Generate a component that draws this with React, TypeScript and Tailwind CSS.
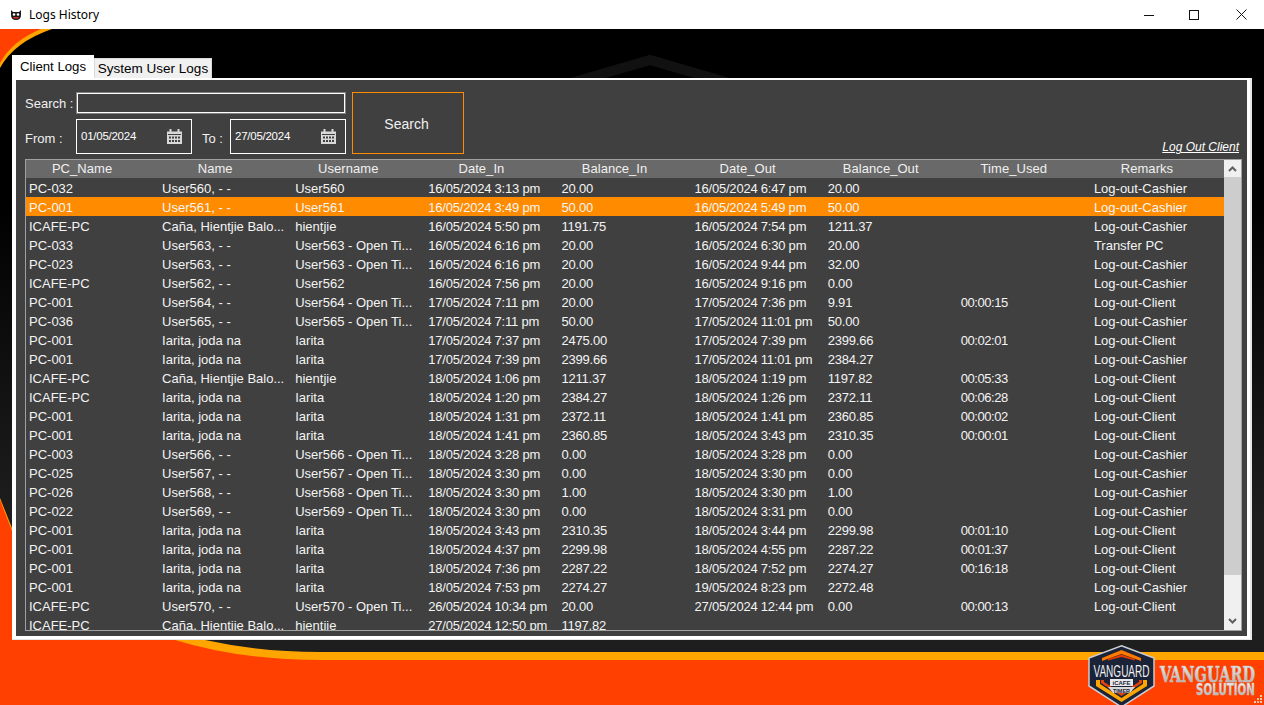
import React from 'react';

const rows: string[][] = [
  ['PC-032', 'User560, - -', 'User560', '16/05/2024 3:13 pm', '20.00', '16/05/2024 6:47 pm', '20.00', '', 'Log-out-Cashier'],
  ['PC-001', 'User561, - -', 'User561', '16/05/2024 3:49 pm', '50.00', '16/05/2024 5:49 pm', '50.00', '', 'Log-out-Cashier'],
  ['ICAFE-PC', 'Caña, Hientjie Balo...', 'hientjie', '16/05/2024 5:50 pm', '1191.75', '16/05/2024 7:54 pm', '1211.37', '', 'Log-out-Cashier'],
  ['PC-033', 'User563, - -', 'User563 - Open Ti...', '16/05/2024 6:16 pm', '20.00', '16/05/2024 6:30 pm', '20.00', '', 'Transfer PC'],
  ['PC-023', 'User563, - -', 'User563 - Open Ti...', '16/05/2024 6:16 pm', '20.00', '16/05/2024 9:44 pm', '32.00', '', 'Log-out-Cashier'],
  ['ICAFE-PC', 'User562, - -', 'User562', '16/05/2024 7:56 pm', '20.00', '16/05/2024 9:16 pm', '0.00', '', 'Log-out-Cashier'],
  ['PC-001', 'User564, - -', 'User564 - Open Ti...', '17/05/2024 7:11 pm', '20.00', '17/05/2024 7:36 pm', '9.91', '00:00:15', 'Log-out-Client'],
  ['PC-036', 'User565, - -', 'User565 - Open Ti...', '17/05/2024 7:11 pm', '50.00', '17/05/2024 11:01 pm', '50.00', '', 'Log-out-Cashier'],
  ['PC-001', 'Iarita, joda na', 'Iarita', '17/05/2024 7:37 pm', '2475.00', '17/05/2024 7:39 pm', '2399.66', '00:02:01', 'Log-out-Client'],
  ['PC-001', 'Iarita, joda na', 'Iarita', '17/05/2024 7:39 pm', '2399.66', '17/05/2024 11:01 pm', '2384.27', '', 'Log-out-Cashier'],
  ['ICAFE-PC', 'Caña, Hientjie Balo...', 'hientjie', '18/05/2024 1:06 pm', '1211.37', '18/05/2024 1:19 pm', '1197.82', '00:05:33', 'Log-out-Client'],
  ['ICAFE-PC', 'Iarita, joda na', 'Iarita', '18/05/2024 1:20 pm', '2384.27', '18/05/2024 1:26 pm', '2372.11', '00:06:28', 'Log-out-Client'],
  ['PC-001', 'Iarita, joda na', 'Iarita', '18/05/2024 1:31 pm', '2372.11', '18/05/2024 1:41 pm', '2360.85', '00:00:02', 'Log-out-Client'],
  ['PC-001', 'Iarita, joda na', 'Iarita', '18/05/2024 1:41 pm', '2360.85', '18/05/2024 3:43 pm', '2310.35', '00:00:01', 'Log-out-Client'],
  ['PC-003', 'User566, - -', 'User566 - Open Ti...', '18/05/2024 3:28 pm', '0.00', '18/05/2024 3:28 pm', '0.00', '', 'Log-out-Cashier'],
  ['PC-025', 'User567, - -', 'User567 - Open Ti...', '18/05/2024 3:30 pm', '0.00', '18/05/2024 3:30 pm', '0.00', '', 'Log-out-Cashier'],
  ['PC-026', 'User568, - -', 'User568 - Open Ti...', '18/05/2024 3:30 pm', '1.00', '18/05/2024 3:30 pm', '1.00', '', 'Log-out-Cashier'],
  ['PC-022', 'User569, - -', 'User569 - Open Ti...', '18/05/2024 3:30 pm', '0.00', '18/05/2024 3:31 pm', '0.00', '', 'Log-out-Cashier'],
  ['PC-001', 'Iarita, joda na', 'Iarita', '18/05/2024 3:43 pm', '2310.35', '18/05/2024 3:44 pm', '2299.98', '00:01:10', 'Log-out-Client'],
  ['PC-001', 'Iarita, joda na', 'Iarita', '18/05/2024 4:37 pm', '2299.98', '18/05/2024 4:55 pm', '2287.22', '00:01:37', 'Log-out-Client'],
  ['PC-001', 'Iarita, joda na', 'Iarita', '18/05/2024 7:36 pm', '2287.22', '18/05/2024 7:52 pm', '2274.27', '00:16:18', 'Log-out-Client'],
  ['PC-001', 'Iarita, joda na', 'Iarita', '18/05/2024 7:53 pm', '2274.27', '19/05/2024 8:23 pm', '2272.48', '', 'Log-out-Cashier'],
  ['ICAFE-PC', 'User570, - -', 'User570 - Open Ti...', '26/05/2024 10:34 pm', '20.00', '27/05/2024 12:44 pm', '0.00', '00:00:13', 'Log-out-Client'],
  ['ICAFE-PC', 'Caña, Hientjie Balo...', 'hientjie', '27/05/2024 12:50 pm', '1197.82', '', '', '', ''],
];

const columns = ['PC_Name', 'Name', 'Username', 'Date_In', 'Balance_In', 'Date_Out', 'Balance_Out', 'Time_Used', 'Remarks'];

// the digits in the reference run a little narrower than Liberation Sans
const cellTracking = ['', '', '', 'tracking-[-0.22px]', 'tracking-[-0.2px]', 'tracking-[-0.22px]', 'tracking-[-0.2px]', 'tracking-[-0.45px]', ''];

const Backdrop = () => (
  <svg className="absolute inset-0 h-full w-full" viewBox="0 0 1264 705">
    <defs>
      <linearGradient id="fade" x1="0" y1="0" x2="0" y2="1">
        <stop offset="0" stopColor="#000000" />
        <stop offset="1" stopColor="#1e1e1e" />
      </linearGradient>
    </defs>
    <rect x="0" y="29" width="1264" height="676" fill="#000000" />
    <rect x="0" y="200" width="1264" height="320" fill="url(#fade)" />
    <rect x="0" y="520" width="1264" height="140" fill="#1e1e1e" />
    <path d="M0 68 Q14 42 52 29 L0 29 Z" fill="#ffa500" />
    <path d="M0 63 Q12 41 41 29 L0 29 Z" fill="#ff4000" />
    <path d="M540 92 L650 60 L760 92" fill="none" stroke="#111111" strokeWidth="10" />
    <path d="M0 498 L12 528 Q80 620 205 640 Q260 652 320 652 H1264 V705 H0 Z" fill="#ffa500" />
    <path d="M0 500 L12 531 Q70 615 175 640 Q240 660 320 660 H1264 V705 H0 Z" fill="#ff4000" />
  </svg>
);

const CalendarIcon = () => (
  <svg width="17" height="17" viewBox="0 0 17 17" className="shrink-0">
    <path d="M1 3.5 H16 V16 H1 Z" fill="#d8d8d8" />
    <rect x="3.5" y="1" width="2" height="4" fill="#d8d8d8" />
    <rect x="11.5" y="1" width="2" height="4" fill="#d8d8d8" />
    <rect x="2" y="6" width="13" height="1" fill="#404040" />
    {[3, 6, 9, 12].map((x) => (
      <React.Fragment key={x}>
        <rect x={x} y="8.5" width="2" height="2" fill="#404040" />
        <rect x={x} y="12" width="2" height="2" fill="#404040" />
      </React.Fragment>
    ))}
  </svg>
);

const DateBox = ({ value }: { value: string }) => (
  <div className="flex h-[35px] w-[116px] items-start justify-between border border-white pl-[4px] pr-[8px] pt-[8px]">
    <span className="mt-px text-[11.5px] leading-[14px] tracking-[-0.25px] text-white">{value}</span>
    <CalendarIcon />
  </div>
);

const BrandLogo = () => (
  <svg className="absolute left-[1088px] top-[645px]" width="176" height="60" viewBox="0 0 176 60">
    <defs>
      <linearGradient id="chrome" x1="0" y1="0" x2="0" y2="1">
        <stop offset="0" stopColor="#f6f6f6" />
        <stop offset="1" stopColor="#a6a6a6" />
      </linearGradient>
    </defs>
    <path d="M33.5 0.8 L66 13 V41 L33.5 62 L1 41 V13 Z" fill="#1b2338" stroke="#c9ccd2" strokeWidth="1.5" />
    <path d="M14 13 L33.5 5 L53 13 L53 16 L33.5 9 L14 16 Z" fill="#ff7a00" />
    <path d="M20 14 L33.5 9.5 L47 14 L47 15.5 L33.5 12 L20 15.5 Z" fill="#e23b00" />
    <text x="33.5" y="32" textAnchor="middle" fontFamily="'Liberation Sans', sans-serif" fontSize="17" fill="#f2f2f2" textLength="56" lengthAdjust="spacingAndGlyphs">
      VANGUARD
    </text>
    <path d="M8 35 L8 41 L33.5 57 L59 41 L59 35 L55 35 L55 39 L33.5 53 L12 39 L12 35 Z" fill="#ffa500" />
    <path d="M13 35 L13 38 L33.5 51 L54 38 L54 35 L51 35 L51 37 L33.5 48 L16 37 L16 35 Z" fill="#e8400a" />
    <rect x="22" y="34" width="23" height="7" fill="#e8e8e8" />
    <text x="33.5" y="40" textAnchor="middle" fontFamily="'Liberation Sans', sans-serif" fontWeight="700" fontSize="6" fill="#1b2338">
      iCAFE
    </text>
    <path d="M20 42 H47 L42 48 H25 Z" fill="#d8d8d8" />
    <text x="33.5" y="47.5" textAnchor="middle" fontFamily="'Liberation Sans', sans-serif" fontWeight="700" fontSize="5.5" fill="#1b2338">
      TIMER
    </text>
    <text x="72" y="37" fontFamily="'DejaVu Serif', serif" fontWeight="700" fontSize="22" fill="url(#chrome)" stroke="#c4c4c4" strokeWidth="0.6" textLength="95" lengthAdjust="spacingAndGlyphs">
      VANGUARD
    </text>
    <text x="108" y="50" fontFamily="'DejaVu Sans', sans-serif" fontWeight="700" fontSize="15" fill="url(#chrome)" stroke="#c4c4c4" strokeWidth="0.4" textLength="59" lengthAdjust="spacingAndGlyphs">
      SOLUTION
    </text>
  </svg>
);

const Scrollbar = () => (
  <div className="flex flex-1 flex-col bg-[#f0f0f0]">
    <div className="flex h-[17px] items-center justify-center">
      <svg width="9" height="6" viewBox="0 0 9 6">
        <path d="M1 5 L4.5 1.5 L8 5" fill="none" stroke="#606060" strokeWidth="2" />
      </svg>
    </div>
    <div className="h-[398px] bg-[#cdcdcd]" />
    <div className="flex flex-1 items-end justify-center pb-[6px]">
      <svg width="9" height="6" viewBox="0 0 9 6">
        <path d="M1 1 L4.5 4.5 L8 1" fill="none" stroke="#606060" strokeWidth="2" />
      </svg>
    </div>
  </div>
);

const LogsGrid = () => (
  <div className="flex h-[472px] w-[1217px] overflow-hidden border border-[#a0a0a0] bg-[#404040]">
    <div className="w-[1198px] shrink-0 overflow-hidden">
      <div className="grid h-[18px] grid-cols-9 bg-[#696969] text-[#f0f0f0]">
        {columns.map((c) => (
          <div key={c} className="pr-[21px] text-center leading-[18px] tracking-[0.05px]">
            {c}
          </div>
        ))}
      </div>
      {rows.map((row, i) => (
        <div key={i} className={`grid h-[19px] grid-cols-9 text-[#f4f4f4] ${i === 1 ? 'bg-[#ff8c00]' : ''}`}>
          {row.map((cell, j) => (
            <div key={j} className={`whitespace-nowrap pl-[3px] pt-px leading-[19px] ${cellTracking[j]}`}>
              {cell}
            </div>
          ))}
        </div>
      ))}
    </div>
    <Scrollbar />
  </div>
);

const App: React.FC = () => {
  return (
    <div className="relative flex h-[705px] w-[1264px] flex-col overflow-hidden text-[13px] [font-family:'Liberation_Sans',sans-serif]">
      <Backdrop />

      {/* title bar */}
      <div className="relative flex h-[29px] shrink-0 items-center bg-white text-black">
        <svg className="ml-[10px]" width="12" height="12" viewBox="0 0 12 12">
          <path d="M1 1 L3 3 H9 L11 1 V6 Q11 11 6 11 Q1 11 1 6 Z" fill="#1a1a1a" />
          <circle cx="4" cy="5.5" r="1.3" fill="#ffffff" />
          <circle cx="8" cy="5.5" r="1.3" fill="#ffffff" />
          <rect x="3.5" y="8" width="5" height="1.5" fill="#e03020" />
        </svg>
        <span className="ml-[7px] text-[12px] [font-family:'Noto_Sans',sans-serif]">Logs History</span>
        <div className="ml-auto flex h-full">
          <div className="flex w-[42px] items-center justify-center">
            <svg width="10" height="10" viewBox="0 0 10 10">
              <path d="M0 5.5 H10" stroke="#111111" strokeWidth="1" />
            </svg>
          </div>
          <div className="flex w-[48px] items-center justify-center">
            <svg width="10" height="10" viewBox="0 0 10 10">
              <rect x="0.5" y="0.5" width="9" height="9" fill="none" stroke="#111111" strokeWidth="1" />
            </svg>
          </div>
          <div className="flex w-[46px] items-center justify-center">
            <svg width="11" height="11" viewBox="0 0 11 11">
              <path d="M0.5 0.5 L10.5 10.5 M10.5 0.5 L0.5 10.5" stroke="#111111" strokeWidth="1" />
            </svg>
          </div>
        </div>
      </div>

      {/* tab control */}
      <div className="relative pl-[12px] pt-[26px]">
        <div className="flex h-[23px] items-end">
          <div className="flex h-[23px] w-[82px] justify-center bg-white pt-[3px] text-[13.2px] leading-[17px] text-black">Client Logs</div>
          <div className="flex h-[20px] w-[118px] justify-center border border-b-0 border-[#d9d9d9] bg-[#f0f0f0] pt-px text-[13.5px] leading-[17px] text-black">
            System User Logs
          </div>
        </div>
        <div className="h-[562px] w-[1240px] border-b border-r-2 border-[#e6e6e6]">
          <div className="h-full border-x-4 border-b-[3px] border-t-2 border-white border-r-[3px] bg-[#404040] pl-[9px] text-[#f0f0f0]">
            <div className="flex h-[79px] items-start pt-[12px]">
              <div className="mt-px w-[321px]">
                <div className="flex h-[20px] items-center">
                  <span className="w-[52px] whitespace-nowrap pt-[2px]">Search :</span>
                  <div className="h-[20px] w-[268px] border border-white outline outline-1 outline-[#808080]" />
                </div>
                <div className="mt-[6px] flex items-start">
                  <span className="mt-[12px] w-[51px] whitespace-nowrap leading-[15px]">From :</span>
                  <DateBox value="01/05/2024" />
                  <span className="ml-[10px] mt-[12px] w-[28px] whitespace-nowrap leading-[15px]">To :</span>
                  <DateBox value="27/05/2024" />
                </div>
              </div>
              <div className="ml-[6px] flex h-[62px] w-[112px] items-center justify-center border border-[#ff8c00] pr-[3px] pt-[2px] text-[14px]">Search</div>
              <span className="mb-[5px] ml-auto mr-[8px] self-end text-[12px] italic leading-[14px] text-white underline">Log Out Client</span>
            </div>
            <LogsGrid />
          </div>
        </div>
      </div>

      {/* brand, sits over the orange strip */}
      <BrandLogo />
      <svg className="absolute bottom-[2px] right-[2px]" width="8" height="8" viewBox="0 0 8 8">
        <path d="M6 0h2v2H6z M3 3h2v2H3z M6 3h2v2H6z M0 6h2v2H0z M3 6h2v2H3z M6 6h2v2H6z" fill="#e8c8b0" />
      </svg>
    </div>
  );
};

export default App;
